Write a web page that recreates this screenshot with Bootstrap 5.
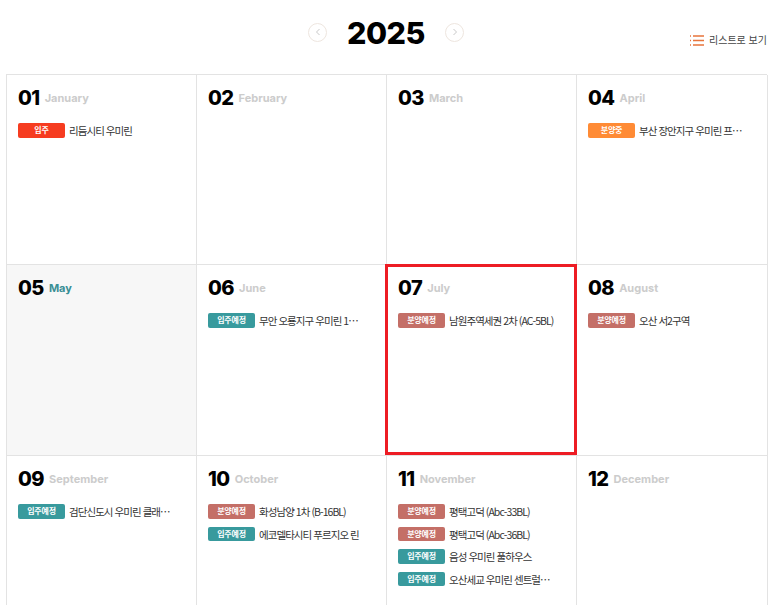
<!DOCTYPE html>
<html lang="ko">
<head>
<meta charset="utf-8">
<title>2025</title>
<link href="https://cdn.jsdelivr.net/npm/bootstrap@5.3.0/dist/css/bootstrap.min.css" rel="stylesheet">
<style>
html,body{height:605px;overflow:hidden;background:#fff}
body{font-family:"Noto Sans CJK KR","Noto Sans",sans-serif;color:#222}
.cal-wrap{padding:0 6px}
.cal-head{height:74px;position:relative}
.year-nav{padding-top:12px;gap:9px;padding-right:1px}
.year-txt{font-family:Inter,"Liberation Sans",sans-serif;font-weight:800;font-size:30.5px;line-height:42px;color:#000;letter-spacing:-.5px;width:100px;text-align:center}
.round-btn{width:19px;height:19px;border:1px solid #eee6df;border-radius:50%;background:#fff;padding:0;line-height:0;margin-top:-2px}
.list-link{position:absolute;right:0;top:31px;font-size:10px;line-height:18px;color:#444;gap:5px;text-decoration:none;white-space:nowrap}
.cal-grid{display:grid;grid-template-columns:190px 190px 190px 191px;grid-template-rows:190px 191px 191px;border-top:1px solid #e3e3e3;border-left:1px solid #e3e3e3;width:761px;margin:0}
.cal-cell{padding:10px 11px 0 11px;border-right:1px solid #e3e3e3;border-bottom:1px solid #e3e3e3;position:relative;min-width:0}
.cal-cell.is-past{background:#f7f7f7}
.cal-cell.is-now::after{content:"";position:absolute;top:-1px;left:-2px;right:-1px;bottom:0;border:3px solid #ed1c24;z-index:2;pointer-events:none}
.day-head{height:26px;gap:5px;margin-bottom:12px}
.day-num{font-family:Inter,"Liberation Sans",sans-serif;font-weight:800;font-size:20px;line-height:26px;color:#000;letter-spacing:-.5px}
.day-month{font-family:Inter,"Liberation Sans",sans-serif;font-weight:700;font-size:11px;color:#ccc}
.is-past .day-month{color:#3a8f95}
.ev-row{height:22.5px;gap:4px;font-size:10.5px;letter-spacing:-.95px;color:#333;align-items:flex-start}
.ev-tag{width:47px;height:14.5px;flex:none;border-radius:2px;color:#fff;font-size:8px;font-weight:700;line-height:14.5px;text-align:center;letter-spacing:-.2px}
.ev-name{line-height:15px;white-space:nowrap}
.tag-move{background:#f63c20}
.tag-sale{background:#ff8b35}
.tag-plan{background:#c46f67}
.tag-due{background:#389a9d}
</style>
</head>
<body>
<div class="cal-wrap">
  <div class="cal-head">
    <div class="year-nav d-flex justify-content-center align-items-center">
      <button class="round-btn d-flex align-items-center justify-content-center" type="button" aria-label="이전"><svg width="6" height="8" viewBox="0 0 6 8"><path d="M4.5 1 1.5 4l3 3" fill="none" stroke="#c9c9c9"/></svg></button>
      <div class="year-txt">2025</div>
      <button class="round-btn d-flex align-items-center justify-content-center" type="button" aria-label="다음"><svg width="6" height="8" viewBox="0 0 6 8"><path d="M1.5 1l3 3-3 3" fill="none" stroke="#c9c9c9"/></svg></button>
    </div>
    <a class="list-link d-flex align-items-center" href="#"><svg width="14" height="11" viewBox="0 0 14 11"><path d="M0 1h1M3 1h11M0 5.5h1M3 5.5h11M0 10h1M3 10h11" stroke="#e8743b" stroke-width="1.3" fill="none"/></svg>리스트로 보기</a>
  </div>
  <div class="cal-grid">
    <div class="cal-cell"><div class="day-head d-flex align-items-center"><span class="day-num">01</span><span class="day-month">January</span></div>
      <div class="ev-row d-flex"><span class="ev-tag tag-move">입주</span><span class="ev-name">리듬시티 우미린</span></div></div>
    <div class="cal-cell"><div class="day-head d-flex align-items-center"><span class="day-num">02</span><span class="day-month">February</span></div></div>
    <div class="cal-cell"><div class="day-head d-flex align-items-center"><span class="day-num">03</span><span class="day-month">March</span></div></div>
    <div class="cal-cell"><div class="day-head d-flex align-items-center"><span class="day-num">04</span><span class="day-month">April</span></div>
      <div class="ev-row d-flex"><span class="ev-tag tag-sale">분양중</span><span class="ev-name">부산 장안지구 우미린 프…</span></div></div>
    <div class="cal-cell is-past"><div class="day-head d-flex align-items-center"><span class="day-num">05</span><span class="day-month">May</span></div></div>
    <div class="cal-cell"><div class="day-head d-flex align-items-center"><span class="day-num">06</span><span class="day-month">June</span></div>
      <div class="ev-row d-flex"><span class="ev-tag tag-due">입주예정</span><span class="ev-name">무안 오룡지구 우미린 1…</span></div></div>
    <div class="cal-cell is-now"><div class="day-head d-flex align-items-center"><span class="day-num">07</span><span class="day-month">July</span></div>
      <div class="ev-row d-flex"><span class="ev-tag tag-plan">분양예정</span><span class="ev-name">남원주역세권 2차 (AC-5BL)</span></div></div>
    <div class="cal-cell"><div class="day-head d-flex align-items-center"><span class="day-num">08</span><span class="day-month">August</span></div>
      <div class="ev-row d-flex"><span class="ev-tag tag-plan">분양예정</span><span class="ev-name">오산 서2구역</span></div></div>
    <div class="cal-cell"><div class="day-head d-flex align-items-center"><span class="day-num">09</span><span class="day-month">September</span></div>
      <div class="ev-row d-flex"><span class="ev-tag tag-due">입주예정</span><span class="ev-name">검단신도시 우미린 클래…</span></div></div>
    <div class="cal-cell"><div class="day-head d-flex align-items-center"><span class="day-num">10</span><span class="day-month">October</span></div>
      <div class="ev-row d-flex"><span class="ev-tag tag-plan">분양예정</span><span class="ev-name">화성남양 1차 (B-16BL)</span></div>
      <div class="ev-row d-flex"><span class="ev-tag tag-due">입주예정</span><span class="ev-name">에코델타시티 푸르지오 린</span></div></div>
    <div class="cal-cell"><div class="day-head d-flex align-items-center"><span class="day-num">11</span><span class="day-month">November</span></div>
      <div class="ev-row d-flex"><span class="ev-tag tag-plan">분양예정</span><span class="ev-name">평택고덕 (Abc-33BL)</span></div>
      <div class="ev-row d-flex"><span class="ev-tag tag-plan">분양예정</span><span class="ev-name">평택고덕 (Abc-36BL)</span></div>
      <div class="ev-row d-flex"><span class="ev-tag tag-due">입주예정</span><span class="ev-name">음성 우미린 풀하우스</span></div>
      <div class="ev-row d-flex"><span class="ev-tag tag-due">입주예정</span><span class="ev-name">오산세교 우미린 센트럴…</span></div></div>
    <div class="cal-cell"><div class="day-head d-flex align-items-center"><span class="day-num">12</span><span class="day-month">December</span></div></div>
  </div>
</div>
<script src="https://cdn.jsdelivr.net/npm/bootstrap@5.3.0/dist/js/bootstrap.bundle.min.js"></script>
</body>
</html>
